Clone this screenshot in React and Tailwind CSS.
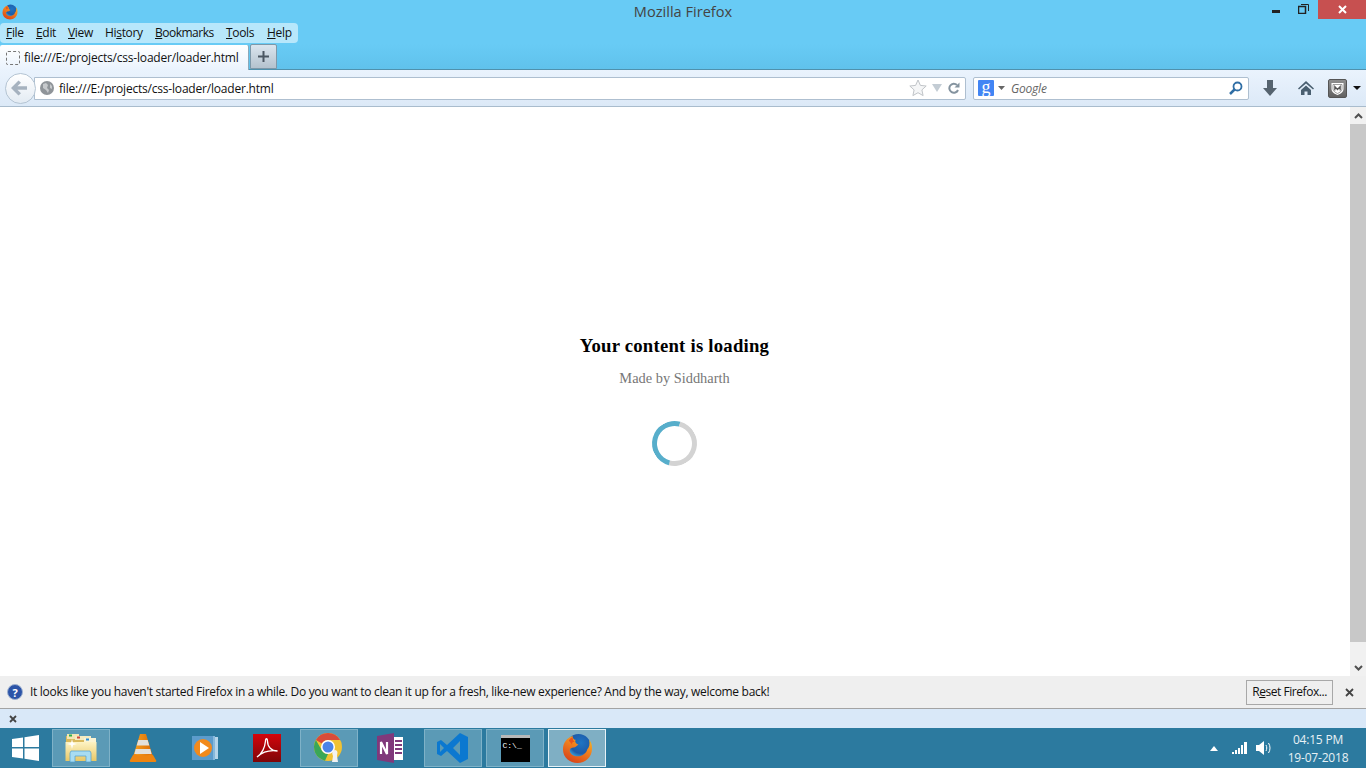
const UI = "font-['Open_Sans','Noto_Sans',sans-serif]";

const FirefoxIcon = ({ size = 16 }) => (
  <svg width={size} height={size} viewBox="0 0 32 32">
    <defs>
      <linearGradient id="foxBody" x1="0.8" y1="0" x2="0.3" y2="1">
        <stop offset="0" stopColor="#f9c926" />
        <stop offset="0.45" stopColor="#f2841e" />
        <stop offset="1" stopColor="#d8431a" />
      </linearGradient>
      <radialGradient id="foxGlobe" cx="0.6" cy="0.35" r="0.6">
        <stop offset="0" stopColor="#1f75c4" />
        <stop offset="0.7" stopColor="#1d5ba8" />
        <stop offset="1" stopColor="#3aa0d8" />
      </radialGradient>
    </defs>
    <circle cx="17" cy="14" r="13" fill="url(#foxGlobe)" />
    <path
      d="M11 3C5 5 1 10 1 17c0 8 7 14 15 14 8 0 15-6 15-15 0-4-1-7-3-9 1 5 0 8-2 10-1 4-5 7-10 7-5 0-8-3-8-6 0-2 2-3 4-3 2 0 3-2 5-3-3-1-4-3-3-5-2 0-3.500-2-3-7z"
      fill="url(#foxBody)"
    />
    <path d="M7 8c1-2 2-3 4-4 0 3 1 4 2 5-2 0-3 1-3 3-1-2-2-3-3-4z" fill="#e9541d" />
  </svg>
);

const Menu = ({ k, rest, pre = "" }) => (
  <span>
    {pre}
    <u>{k}</u>
    {rest}
  </span>
);

const TaskButton = ({ active, current, children }) => (
  <div
    className={`w-[58px] h-[38px] flex items-center justify-center border ${
      current
        ? "bg-[#7fafc4] border-[#e6f2f7]"
        : active
          ? "bg-[#5b9ab6] border-[#7fb2c8]"
          : "border-transparent"
    }`}
  >
    {children}
  </div>
);

const App = () => {
  return (
    <div className={`w-full h-screen flex flex-col overflow-hidden bg-white text-black text-[12px] ${UI}`}>
      {/* title bar */}
      <div className="h-[23px] bg-[#68cbf5] flex items-center">
        <div className="flex-1 pl-[2px]">
          <FirefoxIcon size={16} />
        </div>
        <div className="text-[14.6px] text-[#444] mt-[1px] -ml-[2px]">Mozilla Firefox</div>
        <div className="flex-1 flex items-start justify-end self-start h-[19px]">
          <div className="w-[8px] h-[3px] bg-[#222] mt-[10px] mr-[18px]" />
          <svg width="11" height="10" viewBox="0 0 11 10" className="mt-[4px] mr-[9px]" fill="none" stroke="#222">
            <rect x="0.5" y="2.5" width="7" height="7" strokeWidth="1.5" />
            <path d="M3 .5h7.5v6.5" />
          </svg>
          <div className="w-[48px] h-[19px] bg-[#c75050] flex items-center justify-center">
            <svg width="9" height="9" viewBox="0 0 9 9" stroke="#fff" strokeWidth="2">
              <path d="M1 1l7 7M8 1l-7 7" />
            </svg>
          </div>
        </div>
      </div>

      {/* menu bar */}
      <div className="h-[21px] bg-[#68cbf5]">
        <div className="w-[298px] h-[20px] bg-[#b7e7fb] rounded-[4px] flex items-center pl-[6px] text-[12px] tracking-[-0.32px] text-[#111]">
          <span className="w-[30px]"><Menu k="F" rest="ile" /></span>
          <span className="w-[32px]"><Menu k="E" rest="dit" /></span>
          <span className="w-[37px]"><Menu k="V" rest="iew" /></span>
          <span className="w-[50px]"><Menu pre="Hi" k="s" rest="tory" /></span>
          <span className="w-[71px] tracking-[-0.5px]"><Menu k="B" rest="ookmarks" /></span>
          <span className="w-[41px]"><Menu k="T" rest="ools" /></span>
          <span><Menu k="H" rest="elp" /></span>
        </div>
      </div>

      {/* tab strip */}
      <div className="h-[26px] bg-gradient-to-b from-[#68cbf5] to-[#60c2ec] flex items-end border-b border-[#4f91ad]">
        <div className="w-[249px] h-[25px] -mb-[1px] bg-gradient-to-b from-white to-[#eaf3fd] rounded-t-[2px] flex items-center pl-[6px] border-r border-[#8aa9bb]">
          <div className="w-[14px] h-[14px] rounded-[2px] border border-dashed border-[#777] mr-[4px]" />
          <span className="tracking-[-0.2px] text-[#111]">file:///E:/projects/css-loader/loader.html</span>
        </div>
        <div className="w-[27px] h-[25px] ml-[1px] bg-gradient-to-b from-[#dbe5ee] to-[#b4c2ce] border border-[#7d98a9] rounded-t-[2px] flex items-center justify-center">
          <svg width="13" height="13" viewBox="0 0 13 13" stroke="#4b5763" strokeWidth="2">
            <path d="M6.5 1v11M1 6.5h11" />
          </svg>
        </div>
      </div>

      {/* nav bar */}
      <div className="h-[37px] bg-gradient-to-b from-[#eaf3fd] to-[#dce9f7] border-b border-[#a9bccd] flex items-center pl-[5px] pr-[4px]">
        <div className="w-[31px] h-[31px] rounded-full bg-gradient-to-b from-white to-[#e3ebf3] border border-[#b4c4d3] flex items-center justify-center pr-[3px] z-10 -mr-[1px] shrink-0">
          <svg width="18" height="16" viewBox="0 0 18 16" fill="#a6b2bf">
            <path d="M8.5 0.5L1 8l7.5 7.5 2.5-2.3-3.6-3.4H17V6.200H7.400L11 2.800z" />
          </svg>
        </div>
        <div className="w-[932px] h-[23px] bg-white border border-[#aebfd0] rounded-r-[2px] flex items-center pl-[5px] pr-[5px] shrink-0 -ml-[1px]">
          <svg width="14" height="14" viewBox="0 0 14 14" className="shrink-0">
            <circle cx="7" cy="7" r="7" fill="#8f9499" />
            <path d="M3 3l3-1 2 2-1 3 2 2-1 3-2-3-3-2zM10 3l2 2 0 3-2-1z" fill="#c6c9cc" />
          </svg>
          <span className="ml-[5px] pt-[2px] tracking-[-0.2px] text-[#111]">file:///E:/projects/css-loader/loader.html</span>
          <div className="ml-auto flex items-center">
            <svg width="18" height="18" viewBox="0 0 18 18" fill="#f5f6f7" stroke="#c0c4c8">
              <path d="M9 1l2.400 5.400 5.800.6-4.300 3.900 1.200 5.700L9 13.700l-5.100 2.900 1.200-5.700L.8 7l5.800-.6z" />
            </svg>
            <svg width="10" height="8" viewBox="0 0 10 8" fill="#c3ccd4" className="ml-[5px]">
              <path d="M0 0h10L5 8z" />
            </svg>
            <svg width="12" height="12" viewBox="0 0 12 12" fill="none" className="ml-[6px]">
              <path d="M10 8a4.500 4.500 0 1 1-1-5" stroke="#84939f" strokeWidth="2" />
              <path d="M11.500 0.500v5h-5z" fill="#84939f" />
            </svg>
          </div>
        </div>
        <div className="w-[276px] h-[23px] ml-[7px] bg-white border border-[#aebfd0] rounded-[2px] flex items-center pl-[4px] pr-[5px] shrink-0">
          <div className="w-[16px] h-[16px] bg-[#4285f4] rounded-[1px] flex items-center justify-center text-white text-[18px] pb-[3px] font-['Liberation_Serif',serif] leading-none">g</div>
          <svg width="7" height="4" viewBox="0 0 7 4" fill="#666" className="ml-[4px]">
            <path d="M0 0h7L3.500 4z" />
          </svg>
          <span className="ml-[6px] pt-[2px] italic text-[#666] tracking-[-0.2px]">Google</span>
          <svg width="14" height="14" viewBox="0 0 14 14" fill="none" className="ml-auto" stroke="#2f6ea5">
            <circle cx="8.500" cy="5.500" r="4" strokeWidth="1.800" />
            <path d="M5.500 8.500L1 13" strokeWidth="2.500" />
          </svg>
        </div>
        <svg width="14" height="16" viewBox="0 0 14 16" fill="#55636f" className="ml-[14px] shrink-0">
          <path d="M4 0h6v8h4l-7 8-7-8h4z" />
        </svg>
        <svg width="16" height="14" viewBox="0 0 16 14" className="ml-[21px] shrink-0" fill="#4a5f70">
          <path d="M8 0L0 7.500l1 1L8 2.500l7 6 1-1zM3 9l5-4.500L13 9v5H9.500v-3.500h-3V14H3z" />
        </svg>
        <div className="ml-[14px] w-[19px] h-[19px] bg-gradient-to-b from-[#8e8e8e] to-[#626262] border border-[#555] rounded-[2px] flex items-center justify-center shrink-0">
          <svg width="15" height="15" viewBox="0 0 15 15">
            <path d="M1.500 2h12v6c0 3-3 5-6 6-3-1-6-3-6-6z" fill="#fff" />
            <path d="M3 3.500h9v4.500c0 2-2.500 3.700-4.500 4.500C5.500 11.700 3 10 3 8z" fill="none" stroke="#777" strokeWidth="0.700" />
            <path d="M4.800 9.500V5.500L7.500 8.500l2.700-3v4" fill="none" stroke="#555" strokeWidth="1.200" />
          </svg>
        </div>
        <svg width="8" height="4" viewBox="0 0 8 4" fill="#111" className="ml-[6px] shrink-0">
          <path d="M0 0h8L4 4z" />
        </svg>
      </div>

      {/* page + scrollbar */}
      <div className="flex-1 flex min-h-0">
        <div className="flex-1 flex flex-col items-center pt-[226px] pr-[1px] font-['Liberation_Serif',serif]">
          <h3 className="text-[18.72px] font-bold leading-[26px] tracking-[0.23px] text-black">Your content is loading</h3>
          <p className="mt-[11px] text-[14.4px] leading-[16px] text-[#777]">Made by Siddharth</p>
          <div className="mt-[35px] w-[45px] h-[45px] rounded-full border-[5px] border-[#d3d3d3] border-t-[#57aecb] border-l-[#57aecb] -rotate-[30deg]" />
        </div>
        <div className="w-[16px] bg-[#f1f1f1] flex flex-col">
          <div className="h-[17px] flex items-center justify-center">
            <svg width="9" height="6" viewBox="0 0 9 6" fill="none" stroke="#505050" strokeWidth="2">
              <path d="M1 5l3.500-3.500L8 5" />
            </svg>
          </div>
          <div className="flex-1 bg-[#c8c8c8] mb-[17px]" />
          <div className="h-[17px] flex items-center justify-center">
            <svg width="9" height="6" viewBox="0 0 9 6" fill="none" stroke="#505050" strokeWidth="2">
              <path d="M1 1l3.500 3.500L8 1" />
            </svg>
          </div>
        </div>
      </div>

      {/* notification */}
      <div className="h-[33px] bg-[#efefef] border-b border-[#a3a3a3] flex items-center pl-[7px] shrink-0">
        <div className="w-[16px] h-[16px] rounded-full bg-[#2c54a8] border border-[#9fb2d0] text-white text-[11px] font-bold flex items-center justify-center leading-none">?</div>
        <span className="ml-[7px] tracking-[-0.305px] text-[#111]">
          It looks like you haven't started Firefox in a while. Do you want to clean it up for a fresh, like-new experience? And by the way, welcome back!
        </span>
        <div className="ml-auto w-[87px] h-[25px] border border-[#a8a8a8] flex items-center justify-center tracking-[-0.45px] text-[#111]">
          <span>R<u>e</u>set Firefox...</span>
        </div>
        <svg width="9" height="9" viewBox="0 0 9 9" stroke="#444" strokeWidth="1.800" className="ml-[12px] mr-[12px]">
          <path d="M1 1l7 7M8 1l-7 7" />
        </svg>
      </div>

      {/* close strip */}
      <div className="h-[19px] bg-[#d9e8f8] flex items-center pl-[9px] shrink-0">
        <svg width="8" height="8" viewBox="0 0 8 8" stroke="#444" strokeWidth="1.800">
          <path d="M1 1l6 6M7 1L1 7" />
        </svg>
      </div>

      {/* taskbar */}
      <div className="h-[40px] bg-[#2c7a9f] flex items-center shrink-0 text-white">
        <div className="w-[52px] flex items-center justify-center pr-[2px]">
          <svg width="27" height="26" viewBox="0 0 27 26" fill="#fff">
            <path d="M0 4l11-1.600V12H0zM12.500 2.200L27 0v12H12.500zM0 13.500h11v10L0 22zM12.500 13.500H27V26l-14.500-2.200z" />
          </svg>
        </div>
        <div className="flex gap-[4px]">
          <TaskButton active>
            <svg width="32" height="30" viewBox="0 0 32 30">
              <defs>
                <linearGradient id="folderFront" x1="0" y1="0" x2="0" y2="1">
                  <stop offset="0" stopColor="#fdf3c4" />
                  <stop offset="1" stopColor="#e8c765" />
                </linearGradient>
              </defs>
              <path d="M1 3h12v3h18v22H1z" fill="#d9b95c" />
              <rect x="2" y="1" width="12" height="5" fill="#f3e6b4" />
              <rect x="4" y="1.500" width="3" height="2" fill="#2fae4a" />
              <rect x="10" y="3" width="16" height="4" fill="#f6ecc2" />
              <rect x="12" y="3.500" width="3" height="2" fill="#d04a3a" />
              <rect x="19" y="5" width="12" height="4" fill="#fbf4d4" />
              <rect x="21" y="5.500" width="3" height="2" fill="#2f8fd8" />
              <rect x="0.500" y="9" width="31" height="19" fill="url(#folderFront)" />
              <path d="M5 29v-9l1-2h19l1 2v9h-5v-6H10v6z" fill="#a8dcf2" stroke="#4f9fd0" strokeWidth="0.700" />
              <path d="M7 6l1 4 4 1-4 1-1 4-1-4-4-1 4-1z" fill="#fff" />
            </svg>
          </TaskButton>
          <TaskButton>
            <svg width="28" height="30" viewBox="0 0 28 30">
              <defs>
                <linearGradient id="coneFill" x1="0" y1="0" x2="1" y2="0">
                  <stop offset="0" stopColor="#f9a31e" />
                  <stop offset="1" stopColor="#d96a08" />
                </linearGradient>
              </defs>
              <path d="M11 1h6l7 23H4z" fill="url(#coneFill)" />
              <path d="M9.300 7h9.400l1.600 5.500H7.700zM6.700 16h14.600l1.300 5H5.400z" fill="#e2e0dc" />
              <path d="M4 22l2-1c3 2 13 2 16 0l2 1 3.500 6-1 1H1.500l-1-1z" fill="#ee8410" />
            </svg>
          </TaskButton>
          <TaskButton>
            <svg width="28" height="26" viewBox="0 0 28 26">
              <rect x="6" y="2" width="21" height="22" fill="#b6d5ea" />
              <rect x="4" y="1" width="20" height="24" fill="#86b8db" />
              <rect x="1" y="1" width="21" height="24" fill="#5c9ccc" />
              <circle cx="12" cy="13" r="9" fill="#f28a1c" />
              <path d="M9 7l9 6-9 6z" fill="#fff" />
            </svg>
          </TaskButton>
          <TaskButton>
            <div className="w-[28px] h-[28px] bg-gradient-to-b from-[#d5040b] to-[#7e0508] flex items-center justify-center">
              <svg width="22" height="22" viewBox="0 0 22 22" fill="none" stroke="#fff" strokeWidth="1.300">
                <path d="M1 20c5-3 8-10 8.500-16 0-3 2-3 2 0 0 6 4 10 10 10-7-1-15 1-20.500 6z" />
              </svg>
            </div>
          </TaskButton>
          <TaskButton active>
            <svg width="32" height="32" viewBox="0 0 32 32">
              <circle cx="15" cy="15" r="14" fill="#f1c232" />
              <path d="M15 1a14 14 0 0 1 12.100 7H15a7 7 0 0 0-6.100 3.500L2.900 8A14 14 0 0 1 15 1z" fill="#d84b3a" />
              <path d="M2.900 8l6 10.500A7 7 0 0 0 15 22l-3 6.700A14 14 0 0 1 2.900 8z" fill="#3aa757" />
              <circle cx="15" cy="15" r="7" fill="#fff" />
              <circle cx="15" cy="15" r="5.500" fill="#4a84e8" />
              <path d="M20 19a3 3 0 0 1 4 0c1 2 0 3 0 5l1 6h-6l1-6c-1-2-1-4 0-5z" fill="#f2f2f2" />
            </svg>
          </TaskButton>
          <TaskButton>
            <svg width="30" height="32" viewBox="0 0 30 32">
              <path d="M1 4l17-3v30L1 28z" fill="#80397b" />
              <path d="M18 5h9v23h-9z" fill="#fff" />
              <path d="M19 9h7M19 13h7M19 17h7M19 21h7" stroke="#80397b" strokeWidth="2" />
              <path d="M5 22V10l6 12V10" stroke="#fff" strokeWidth="2.200" fill="none" />
            </svg>
          </TaskButton>
          <TaskButton active>
            <svg width="32" height="32" viewBox="0 0 32 32" fill="#0b78d0">
              <path d="M23 1l8 4v22l-8 4-13-12-6 5-4-2V10l4-2 6 5zM23 9l-7 7 7 7zM3 12v8l4-4z" />
            </svg>
          </TaskButton>
          <TaskButton active>
            <div className="w-[29px] h-[27px] bg-black border-t-[3px] border-[#b8b8b8] text-[8px] leading-[12px] font-['Liberation_Mono',monospace] text-white pl-[2px] pt-[2px]">C:\_</div>
          </TaskButton>
          <TaskButton current>
            <FirefoxIcon size={31} />
          </TaskButton>
        </div>
        <div className="ml-auto flex items-center mr-[13px]">
          <svg width="8" height="5" viewBox="0 0 8 5" fill="#fff">
            <path d="M4 0l4 5H0z" />
          </svg>
          <svg width="16" height="12" viewBox="0 0 16 12" fill="#fff" className="ml-[14px]">
            <path d="M0 10h2v2H0zM3 8h2v4H3zM6 6h2v6H6zM9 3h2v9H9zM12 0h3v12h-3z" />
          </svg>
          <svg width="16" height="14" viewBox="0 0 16 14" fill="none" className="ml-[8px]">
            <path d="M0 4h3l5-4v14l-5-4H0z" fill="#fff" />
            <path d="M10 4c1 2 1 4 0 6M12.500 2c2 3 2 7 0 10" stroke="#fff" />
          </svg>
          <div className="ml-[11px] w-[70px] pt-[2px] text-center text-[12px] leading-[18px] tracking-[-0.2px] text-[#e8f1f5] whitespace-nowrap">
            <div>04:15 PM</div>
            <div>19-07-2018</div>
          </div>
        </div>
      </div>
    </div>
  );
};

export default App;
